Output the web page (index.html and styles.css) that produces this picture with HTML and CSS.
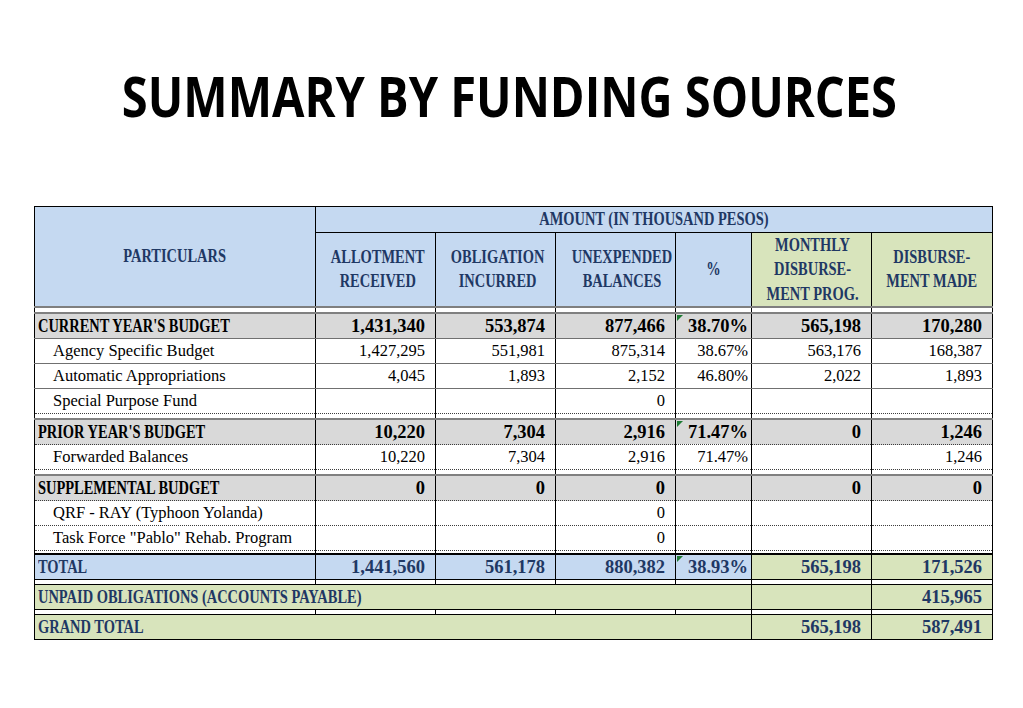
FILE: index.html
```html
<!DOCTYPE html>
<html>
<head>
<meta charset="utf-8">
<title>Summary by Funding Sources</title>
<link rel="stylesheet" href="styles.css">
</head>
<body>
<div class="slide">
  <h1 class="title"><span class="sq">SUMMARY BY FUNDING SOURCES</span></h1>
  <div class="table-wrap">
    <table class="summary">
      <colgroup>
        <col class="c-part"><col class="c-num"><col class="c-num"><col class="c-num"><col class="c-pct"><col class="c-num"><col class="c-last">
      </colgroup>
      <thead>
        <tr class="h1">
          <th class="hpart" rowspan="2"><span class="bx">PARTICULARS</span></th>
          <th class="hamount" colspan="6"><span class="bx">AMOUNT (IN THOUSAND PESOS)</span></th>
        </tr>
        <tr class="h2">
          <th><span class="bx">ALLOTMENT<br>RECEIVED</span></th>
          <th><span class="bx">OBLIGATION<br>INCURRED</span></th>
          <th><span class="bx">UNEXPENDED<br>BALANCES</span></th>
          <th><span class="bx">%</span></th>
          <th class="green"><span class="bx">MONTHLY<br>DISBURSE-<br>MENT PROG.</span></th>
          <th class="green"><span class="bx">DISBURSE-<br>MENT MADE</span></th>
        </tr>
      </thead>
      <tbody>
        <tr class="sep"><td></td><td></td><td></td><td></td><td></td><td></td><td></td></tr>
        <tr class="grp">
          <td class="lbl"><span class="bx">CURRENT YEAR'S BUDGET</span></td>
          <td>1,431,340</td><td>553,874</td><td>877,466</td><td class="pct flag">38.70%</td><td>565,198</td><td>170,280</td>
        </tr>
        <tr class="item">
          <td class="sub">Agency Specific Budget</td>
          <td>1,427,295</td><td>551,981</td><td>875,314</td><td class="pct">38.67%</td><td>563,176</td><td>168,387</td>
        </tr>
        <tr class="item">
          <td class="sub">Automatic Appropriations</td>
          <td>4,045</td><td>1,893</td><td>2,152</td><td class="pct">46.80%</td><td>2,022</td><td>1,893</td>
        </tr>
        <tr class="item dot">
          <td class="sub">Special Purpose Fund</td>
          <td></td><td></td><td>0</td><td class="pct"></td><td></td><td></td>
        </tr>
        <tr class="sep"><td></td><td></td><td></td><td></td><td></td><td></td><td></td></tr>
        <tr class="grp dot">
          <td class="lbl"><span class="bx">PRIOR YEAR'S BUDGET</span></td>
          <td>10,220</td><td>7,304</td><td>2,916</td><td class="pct flag">71.47%</td><td>0</td><td>1,246</td>
        </tr>
        <tr class="item dot">
          <td class="sub">Forwarded Balances</td>
          <td>10,220</td><td>7,304</td><td>2,916</td><td class="pct">71.47%</td><td></td><td>1,246</td>
        </tr>
        <tr class="sep"><td></td><td></td><td></td><td></td><td></td><td></td><td></td></tr>
        <tr class="grp dot">
          <td class="lbl"><span class="bx">SUPPLEMENTAL BUDGET</span></td>
          <td>0</td><td>0</td><td>0</td><td class="pct"></td><td>0</td><td>0</td>
        </tr>
        <tr class="item dot">
          <td class="sub">QRF - RAY (Typhoon Yolanda)</td>
          <td></td><td></td><td>0</td><td class="pct"></td><td></td><td></td>
        </tr>
        <tr class="item dot">
          <td class="sub">Task Force "Pablo" Rehab. Program</td>
          <td></td><td></td><td>0</td><td class="pct"></td><td></td><td></td>
        </tr>
        <tr class="sep sep-short"><td></td><td></td><td></td><td></td><td></td><td></td><td></td></tr>
        <tr class="total">
          <td class="lbl"><span class="bx">TOTAL</span></td>
          <td>1,441,560</td><td>561,178</td><td>880,382</td><td class="pct flag">38.93%</td><td class="g">565,198</td><td class="g">171,526</td>
        </tr>
        <tr class="sep sep2"><td></td><td></td><td></td><td></td><td></td><td></td><td></td></tr>
        <tr class="foot">
          <td class="lbl" colspan="5"><span class="bx">UNPAID OBLIGATIONS (ACCOUNTS PAYABLE)</span></td>
          <td></td><td>415,965</td>
        </tr>
        <tr class="sep sep2"><td></td><td></td><td></td><td></td><td></td><td></td><td></td></tr>
        <tr class="foot">
          <td class="lbl" colspan="5"><span class="bx">GRAND TOTAL</span></td>
          <td>565,198</td><td>587,491</td>
        </tr>
      </tbody>
    </table>
  </div>
</div>
</body>
</html>
```
FILE: styles.css
```css
html, body {
  margin: 0;
  background: #ffffff;
}

.slide {
  padding-top: 67px;
}

.title {
  margin: 0;
  padding-right: 4px;
  text-align: center;
  font-family: "Open Sans", "Noto Sans", sans-serif;
  font-weight: 700;
  font-size: 56px;
  line-height: 56px;
  color: #000000;
}

.title .sq {
  display: inline-block;
  transform: scaleX(0.84);
  white-space: nowrap;
}

.table-wrap {
  margin-top: 83px;
  padding-left: 34px;
}

.summary {
  border-collapse: collapse;
  table-layout: fixed;
  width: 958px;
  font-family: "Liberation Serif", "Times New Roman", serif;
  color: #000000;
  border: 1px solid #000000;
}

col.c-part { width: 281px; }
col.c-num { width: 120px; }
col.c-pct { width: 76px; }
col.c-last { width: 121px; }

.summary th,
.summary td {
  border-left: 1px solid #000000;
  border-right: 1px solid #000000;
  padding: 0;
  white-space: nowrap;
  overflow: visible;
}

.bx {
  display: inline-block;
  transform: scaleX(0.76);
  transform-origin: center center;
}

/* header */
.summary thead th {
  background: #c5d9f1;
  color: #1f3864;
  font-weight: 700;
  font-size: 19px;
  line-height: 24.5px;
  text-align: center;
  vertical-align: middle;
}

.summary thead th.green {
  background: #d8e4bc;
}

.h1 .hamount {
  height: 24px;
  border-bottom: 1px solid #000000;
}

.h2 th {
  height: 70px;
  border-bottom: 2px solid #7f7f7f;
}

.summary thead .hpart {
  border-bottom: 2px solid #7f7f7f;
}

/* body */
.summary tbody td {
  height: 24px;
  font-size: 16.5px;
  line-height: 20px;
  text-align: right;
  padding-right: 10px;
  vertical-align: middle;
  border-bottom: 1px solid #707070;
  background: #ffffff;
}

.summary tbody td.lbl {
  text-align: left;
  padding-left: 3px;
  padding-right: 0;
  font-size: 19px;
  font-weight: 700;
}

.summary tbody td.lbl .bx {
  transform-origin: left center;
}

.summary tbody td.sub {
  text-align: left;
  padding-left: 18px;
  padding-right: 0;
}

.summary tbody td.pct {
  padding-right: 3px;
}

.summary tbody tr.grp td {
  background: #d9d9d9;
  font-weight: 700;
  font-size: 18.5px;
  border-top: 2px solid #808080;
}

.summary tbody tr.grp td.lbl {
  font-size: 19px;
}

.summary tbody tr.dot td {
  border-bottom: 1px dotted #3c3c3c;
}

.summary tbody tr.sep td {
  height: 4px;
  line-height: 0;
  font-size: 0;
  background: #ffffff;
  border-bottom: none;
}

.summary tbody tr.sep-short td {
  height: 2px;
}

.summary tbody tr.sep2 td {
  height: 4px;
}

.summary tbody tr.total td {
  height: 24px;
  background: #c5d9f1;
  color: #1f3864;
  font-weight: 700;
  font-size: 18.5px;
  border-top: 2px solid #000000;
  border-bottom: 1px solid #000000;
}

.summary tbody tr.total td.g {
  background: #d8e4bc;
}

.summary tbody tr.total td.lbl,
.summary tbody tr.foot td.lbl {
  font-size: 19px;
}

.summary tbody tr.foot td {
  background: #d8e4bc;
  color: #1f3864;
  font-weight: 700;
  font-size: 18.5px;
  border-top: 1px solid #000000;
  border-bottom: 1px solid #000000;
}

.summary tbody td.flag {
  position: relative;
}

.summary tbody td.flag::before {
  content: "";
  position: absolute;
  left: 1px;
  top: 1px;
  border-top: 6px solid #1e7b34;
  border-right: 6px solid transparent;
}
```
